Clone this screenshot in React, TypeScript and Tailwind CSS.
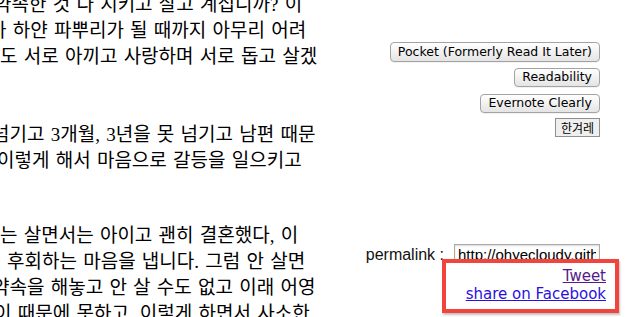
const paragraphs: Array<Array<{ text: string; shift: string }>> = [
  [
    { text: '약속한 것 다 지키고 살고 계십니까? 이', shift: 'ml-[-6px]' },
    { text: '가 하얀 파뿌리가 될 때까지 아무리 어려', shift: 'ml-[-11px]' },
    { text: '도 서로 아끼고 사랑하며 서로 돕고 살겠', shift: 'ml-0' },
  ],
  [
    { text: '넘기고 3개월, 3년을 못 넘기고 남편 때문', shift: 'ml-[-8px]' },
    { text: '이렇게 해서 마음으로 갈등을 일으키고', shift: 'ml-[-3px]' },
  ],
  [
    { text: '는 살면서는 아이고 괜히 결혼했다, 이', shift: 'ml-0' },
    { text: '후회하는 마음을 냅니다. 그럼 안 살면', shift: 'ml-[7px]' },
    { text: '약속을 해놓고 안 살 수도 없고 이래 어영', shift: 'ml-[-8px]' },
    { text: '이 때문에 못하고, 이렇게 하면서 사소한', shift: 'ml-[-6px]' },
  ],
]

const buttons = [
  { label: 'Pocket (Formerly Read It Later)', className: 'mt-0 h-[20px]' },
  { label: 'Readability', className: 'mt-[6px] h-[19px]' },
  { label: 'Evernote Clearly', className: 'mt-[7px] h-[19px]' },
]

function ArticleText() {
  return (
    <div className="w-[330px] shrink-0 overflow-hidden">
      <div className="mt-[-8px] font-['Liberation_Serif','Noto_Sans_CJK_KR',serif] text-[19px] leading-[26px] text-black [word-spacing:1.5px]">
        {paragraphs.map((lines, i) => (
          <div
            key={i}
            className={i === 0 ? 'mb-[52px]' : i === 1 ? 'mb-[49px]' : ''}
          >
            {lines.map((line, j) => (
              <div key={j} className={`whitespace-nowrap ${line.shift}`}>
                {line.text}
              </div>
            ))}
          </div>
        ))}
      </div>
    </div>
  )
}

function SideBar() {
  return (
    <div className="flex-1 pt-[42px]">
      {/* Read-later buttons */}
      <div className="flex flex-col items-end pr-[25px]">
        {buttons.map((b) => (
          <button
            key={b.label}
            className={`${b.className} rounded-[4px] border border-[#a3a3a3] bg-linear-to-b from-white to-[#e4e4e4] px-[7px] font-['DejaVu_Sans',sans-serif] text-[12.5px] leading-none text-black shadow-[0_1px_0_rgba(0,0,0,0.05)]`}
          >
            {b.label}
          </button>
        ))}
        <button className="mt-[5px] h-[19px] border border-[#8f8f8f] bg-[#efefef] px-[5px] font-['Noto_Sans_CJK_KR',sans-serif] text-[12px] leading-none text-black">
          한겨레
        </button>
      </div>

      {/* Permalink */}
      <div className="mt-[106px] flex items-baseline justify-end gap-[10px] pr-[25px]">
        <span className="font-['Liberation_Sans',sans-serif] text-[16px] text-[#111]">
          permalink :
        </span>
        <input
          readOnly
          value="http://ohyecloudy.github.io/blog/2013/"
          className="h-[22px] w-[146px] border border-[#a9a9a9] bg-white px-[3px] font-['Liberation_Sans',sans-serif] text-[15px] text-black shadow-[inset_0_1px_2px_rgba(0,0,0,0.15)] outline-none"
        />
      </div>

      {/* Share links, boxed by an annotation */}
      <div className="relative pr-[19px] text-right font-['DejaVu_Sans',sans-serif] text-[15px] leading-[18px]">
        <div className="absolute top-[-8px] bottom-[-10px] left-[112px] right-[6px] border-4 border-[#f1443c] bg-white shadow-[1px_2px_2px_rgba(0,0,0,0.25)]" />
        <div className="relative flex flex-col items-end">
          <a href="#" className="text-[#551a8b] underline">
            Tweet
          </a>
          <a href="#" className="text-[#2a10e0] underline">
            share on Facebook
          </a>
        </div>
      </div>
    </div>
  )
}

export default function App() {
  return (
    <div className="flex h-[317px] w-[625px] overflow-hidden bg-white">
      <ArticleText />
      <SideBar />
    </div>
  )
}
